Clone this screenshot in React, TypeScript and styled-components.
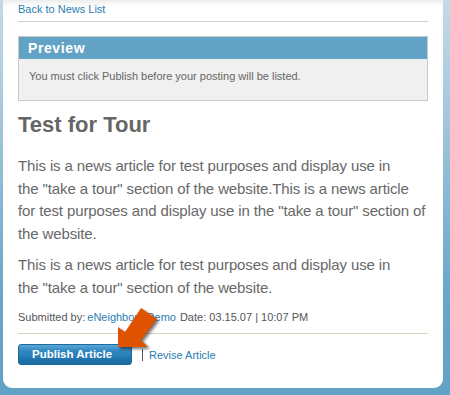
import React from "react";
import styled, { createGlobalStyle } from "styled-components";

const GlobalStyle = createGlobalStyle`
  html, body {
    margin: 0;
    padding: 0;
  }

  body {
    height: 395px;
    overflow: hidden;
    font-family: "Liberation Sans", Arial, sans-serif;
    background: linear-gradient(
      to bottom,
      #c3dae7 0%,
      #a9cadf 25%,
      #8ebbd6 45%,
      #69a6c8 75%,
      #62a2c5 100%
    );
  }
`;

const Panel = styled.div`
  position: relative;
  box-sizing: border-box;
  width: 440px;
  height: 388px;
  margin-left: 3px;
  padding: 2px 15px 0;
  background: #fff;
  border-radius: 0 0 9px 9px;
  box-shadow: inset 0 6px 6px -4px rgba(0, 0, 0, 0.1);
`;

const TextLink = styled.a`
  color: #2b7db3;
  text-decoration: none;
  font-size: 11px;
  cursor: pointer;
`;

const BackLink = styled(TextLink)`
  display: block;
  line-height: 15px;
`;

const Rule = styled.div<{ $tone?: string; $gap: number }>`
  height: 1px;
  margin-top: ${(p) => p.$gap}px;
  background: ${(p) => p.$tone || "#d4d0c8"};
`;

const PreviewBox = styled.div`
  margin-top: 14px;
  border: 1px solid #c9c9c9;
  background: #f0f0f0;
`;

const PreviewHeader = styled.div`
  height: 22px;
  line-height: 22px;
  padding-left: 9px;
  background: #62a3c5;
  color: #fff;
  font-size: 14px;
  font-weight: bold;
  letter-spacing: 0.6px;
`;

const PreviewBody = styled.div`
  padding: 10px 10px 17px;
  font-size: 11px;
  line-height: 14px;
  color: #666;
`;

const Title = styled.h1`
  margin: 10px 0 0;
  font-size: 22px;
  line-height: 27px;
  font-weight: bold;
  color: #666;
`;

const Paragraph = styled.p<{ $gap: number }>`
  margin: ${(p) => p.$gap}px 0 0;
  font-size: 15px;
  line-height: 22.7px;
  letter-spacing: -0.12px;
  color: #686868;
  white-space: nowrap;
`;

const Meta = styled.div`
  margin-top: 11px;
  font-size: 11px;
  line-height: 14px;
  color: #555;
  white-space: nowrap;

  a {
    margin: 0 4px 0 2px;
  }
`;

const ActionRow = styled.div`
  position: relative;
  display: flex;
  align-items: center;
  margin-top: 10px;
`;

const PublishButton = styled.button`
  box-sizing: border-box;
  width: 114px;
  height: 21px;
  padding: 0 0 2px 13px;
  border: 1px solid #1b6aa0;
  border-radius: 3px;
  background: linear-gradient(
    to bottom,
    #5aa6d6 0%,
    #3189c1 30%,
    #2a80b9 55%,
    #1e71a8 80%,
    #1a6aa0 100%
  );
  color: #fff;
  font-family: "Liberation Sans", Arial, sans-serif;
  font-size: 11.5px;
  font-weight: bold;
  line-height: 19px;
  text-align: left;
  cursor: pointer;
`;

const Divider = styled.span`
  margin: 0 6px 0 10px;
  width: 1px;
  height: 12px;
  background: #555;
`;

const ActionLink = styled(TextLink)`
  line-height: 14px;
`;

const Pointer = styled.svg`
  position: absolute;
  left: 92px;
  top: -45px;
  width: 60px;
  height: 60px;
  overflow: visible;
  filter: drop-shadow(2px 2px 1.5px rgba(0, 0, 0, 0.55));
  pointer-events: none;
`;

const paragraphOne = [
  "This is a news article for test purposes and display use in",
  'the "take a tour" section of the website.This is a news article',
  'for test purposes and display use in the "take a tour" section of',
  "the website.",
];

const paragraphTwo = [
  "This is a news article for test purposes and display use in",
  'the "take a tour" section of the website.',
];

const Lines = ({ lines }: { lines: string[] }) => (
  <>
    {lines.map((line, index) => (
      <React.Fragment key={index}>
        {line}
        {index < lines.length - 1 && <br />}
      </React.Fragment>
    ))}
  </>
);

const App = () => {
  return (
    <>
      <GlobalStyle />
      <Panel>
        <BackLink>Back to News List</BackLink>
        <Rule $gap={4} />

        <PreviewBox>
          <PreviewHeader>Preview</PreviewHeader>
          <PreviewBody>
            You must click Publish before your posting will be listed.
          </PreviewBody>
        </PreviewBox>

        <Title>Test for Tour</Title>
        <Paragraph $gap={17}>
          <Lines lines={paragraphOne} />
        </Paragraph>
        <Paragraph $gap={8}>
          <Lines lines={paragraphTwo} />
        </Paragraph>

        <Meta>
          Submitted by:<TextLink>eNeighbors Demo</TextLink>Date: 03.15.07 |
          10:07 PM
        </Meta>
        <Rule $gap={9} $tone="#d9d2bf" />

        <ActionRow>
          <PublishButton>Publish Article</PublishButton>
          <Divider />
          <ActionLink>Revise Article</ActionLink>
          <Pointer viewBox="0 0 60 60">
            <polygon
              points="8,48 8,28 15,33 31,9 47,20 31,41 38,48"
              fill="#df5200"
            />
          </Pointer>
        </ActionRow>
      </Panel>
    </>
  );
};

export default App;
